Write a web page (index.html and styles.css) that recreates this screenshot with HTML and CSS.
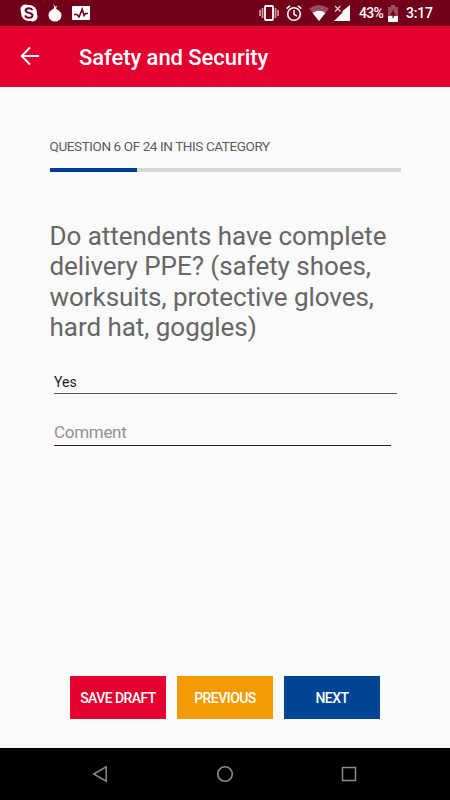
FILE: index.html
```html
<!DOCTYPE html>
<html lang="en">

<head>
    <meta charset="UTF-8">
    <meta name="viewport" content="width=device-width, initial-scale=1.0">
    <title>Safety and Security</title>
    <link rel="stylesheet" href="styles.css">
</head>

<body>
    <div class="status-bar">
        <div class="status-left">
            <svg width="18" height="18" viewBox="0 0 18 18">
                <circle cx="5.5" cy="5.5" r="5" fill="#fff" />
                <circle cx="12.5" cy="12.5" r="5" fill="#fff" />
                <circle cx="9" cy="9" r="8" fill="#fff" />
                <path d="M12.4 6.1C11.9 4.8 10.6 4.2 9 4.2C7 4.2 5.6 5.1 5.6 6.6C5.6 9.6 12.5 8.1 12.5 11.2C12.5 12.9 11 13.8 9 13.8C7.1 13.8 5.6 13 5.3 11.4" fill="none" stroke="#73001a" stroke-width="2" />
            </svg>
            <svg width="14" height="18" viewBox="0 0 14 18">
                <path d="M5.5 0C5.3 1.6 6.3 2.4 6 4.2C4.5 5.8 0.5 7 0.5 11.2A6.5 6.3 0 0 0 13.5 11.2C13.5 7 9.3 6 8 4.4L9.2 1.8L7.2 2.8Z" fill="#fff" />
            </svg>
            <svg width="18" height="14" viewBox="0 0 18 14">
                <rect width="18" height="14" rx="1" fill="#fff" />
                <path d="M2 8.5H5L7 11L10.2 3.2L12 9.5L13.5 7.5H16" fill="none" stroke="#73001a" stroke-width="1.6" />
            </svg>
        </div>
        <div class="status-right">
            <svg width="20" height="18" viewBox="0 0 20 18">
                <path d="M1 6V12M3.5 4V14M16.5 4V14M19 6V12" stroke="#c8a0a8" stroke-width="1.7" />
                <rect x="6" y="2" width="8" height="14" rx="0.8" fill="none" stroke="#fff" stroke-width="1.8" />
            </svg>
            <svg class="alarm" width="18" height="18" viewBox="0 0 18 18">
                <circle cx="9" cy="10" r="6.3" fill="none" stroke="#fff" stroke-width="1.6" />
                <path d="M1.6 4.6L5 1.7M16.4 4.6L13 1.7M9 6V10.3L12 12.2" fill="none" stroke="#fff" stroke-width="1.5" />
            </svg>
            <svg class="wifi" width="20" height="16" viewBox="0 0 20 16">
                <path d="M0 3.5Q10 -3.5 20 3.5L10 16Z" fill="#9c4c60" />
                <path d="M3.6 8Q10 3.6 16.4 8L10 16Z" fill="#fff" />
            </svg>
            <svg class="signal" width="16" height="16" viewBox="0 0 16 16">
                <path d="M16 0V16H0L8.5 7.5V6Z" fill="#fff" />
                <path d="M1 1L6.5 6.5M6.5 1L1 6.5" stroke="#dfc8cd" stroke-width="1.3" />
            </svg>
            <span class="percent">43%</span>
            <svg class="battery" width="10" height="17" viewBox="0 0 10 17">
                <path d="M0 2H3V0H7V2H10V11H0Z" fill="#9c4c60" />
                <path d="M0 11H10V16Q10 17 9 17H1Q0 17 0 16Z" fill="#fff" />
                <path d="M6 4L2 10H4.5V14L8 8.3H6Z" fill="#73001a" />
            </svg>
            <span class="clock">3:17</span>
        </div>
    </div>

    <div class="app-bar">
        <svg class="back" width="20" height="20" viewBox="0 0 20 20">
            <path d="M19 10H2M10 1.5L1.6 10L10 18.5" fill="none" stroke="#fff" stroke-width="1.8" />
        </svg>
        <h1>Safety and Security</h1>
    </div>

    <div class="content">
        <div class="counter">QUESTION 6 OF 24 IN THIS CATEGORY</div>
        <div class="progress">
            <div class="progress-fill" style="width: 25%;"></div>
        </div>
        <p class="question">Do attendents have complete<br>delivery PPE? (safety shoes,<br>worksuits, protective gloves,<br>hard hat, goggles)</p>
        <div class="field answer">Yes</div>
        <div class="field comment">Comment</div>
        <div class="buttons">
            <button class="save">SAVE DRAFT</button>
            <button class="previous">PREVIOUS</button>
            <button class="next">NEXT</button>
        </div>
    </div>

    <div class="nav-bar">
        <svg width="16" height="18" viewBox="0 0 16 18">
            <path d="M14.2 1.8V16.2L1.7 9Z" fill="none" stroke="#8c8c8c" stroke-width="1.5" />
        </svg>
        <svg width="18" height="18" viewBox="0 0 18 18">
            <circle cx="9" cy="9" r="7.3" fill="none" stroke="#8c8c8c" stroke-width="1.6" />
        </svg>
        <svg width="16" height="16" viewBox="0 0 16 16">
            <rect x="1.5" y="1.5" width="13" height="13" fill="none" stroke="#8c8c8c" stroke-width="1.5" />
        </svg>
    </div>
</body>

</html>
```
FILE: styles.css
```css
* {
    box-sizing: border-box;
}

body {
    margin: 0;
    height: 800px;
    display: flex;
    flex-direction: column;
    font-family: Roboto, sans-serif;
    background-color: #fafafa;
}

svg {
    display: block;
    flex-shrink: 0;
}

.status-bar {
    height: 26px;
    padding: 0 17px 0 20px;
    display: flex;
    justify-content: space-between;
    align-items: center;
    background-color: #73001a;
    color: #fff;
}

.status-left,
.status-right {
    display: flex;
    align-items: center;
}

.status-left {
    gap: 10px;
}

.alarm {
    margin-left: 6px;
}

.wifi {
    margin-left: 6px;
}

.signal {
    margin-left: 5px;
}

.percent {
    width: 25px;
    margin-left: 9px;
    font-size: 14px;
    font-weight: 500;
    letter-spacing: -0.7px;
    white-space: nowrap;
}

.battery {
    margin-left: 4px;
}

.clock {
    width: 27px;
    margin-left: 8px;
    font-size: 14px;
    font-weight: 500;
    letter-spacing: -0.2px;
    white-space: nowrap;
}

.app-bar {
    height: 61px;
    padding-left: 20px;
    display: flex;
    align-items: center;
    background-color: #e4002f;
}

h1 {
    margin: 2px 0 0 39px;
    color: #fff;
    font-size: 22px;
    font-weight: 500;
    letter-spacing: -0.06px;
}

.back {
    margin-bottom: 1px;
}

.content {
    flex: 1;
    padding: 51px 49px 29px;
    display: flex;
    flex-direction: column;
}

.counter {
    height: 16px;
    margin-left: 0.5px;
    color: #5c5c5c;
    font-size: 13.5px;
    line-height: 17px;
    letter-spacing: -0.4px;
    white-space: nowrap;
}

.progress {
    height: 4px;
    margin: 14px 0 0 0.5px;
    background-color: #d6d6d6;
}

.progress-fill {
    height: 100%;
    background-color: #003c97;
}

.question {
    margin: 49px 0 0 0.5px;
    color: #666;
    font-size: 26px;
    line-height: 30.3px;
    letter-spacing: -0.04px;
    white-space: nowrap;
}

.field {
    margin-left: 5px;
    border-bottom: 1px solid #555;
}

.answer {
    width: 343px;
    height: 24px;
    margin-top: 28px;
    color: #1a1a1a;
    font-size: 14px;
    line-height: 24px;
}

.comment {
    width: 337px;
    height: 28px;
    margin-top: 24px;
    border-color: #222;
    color: #929292;
    font-size: 17px;
    line-height: 28px;
    letter-spacing: -0.3px;
}

.buttons {
    display: flex;
    justify-content: center;
    gap: 11px;
    margin-top: auto;
}

button {
    width: 96px;
    height: 43px;
    padding: 0;
    border: none;
    color: #fff;
    font-family: inherit;
    font-size: 14px;
    font-weight: 500;
    letter-spacing: -0.55px;
    white-space: nowrap;
}

.save {
    background-color: #e4002f;
}

.previous {
    background-color: #f39b00;
}

.next {
    background-color: #004595;
}

.nav-bar {
    height: 52px;
    padding: 0 93px 0 92px;
    display: flex;
    justify-content: space-between;
    align-items: center;
    background-color: #000;
}
```
